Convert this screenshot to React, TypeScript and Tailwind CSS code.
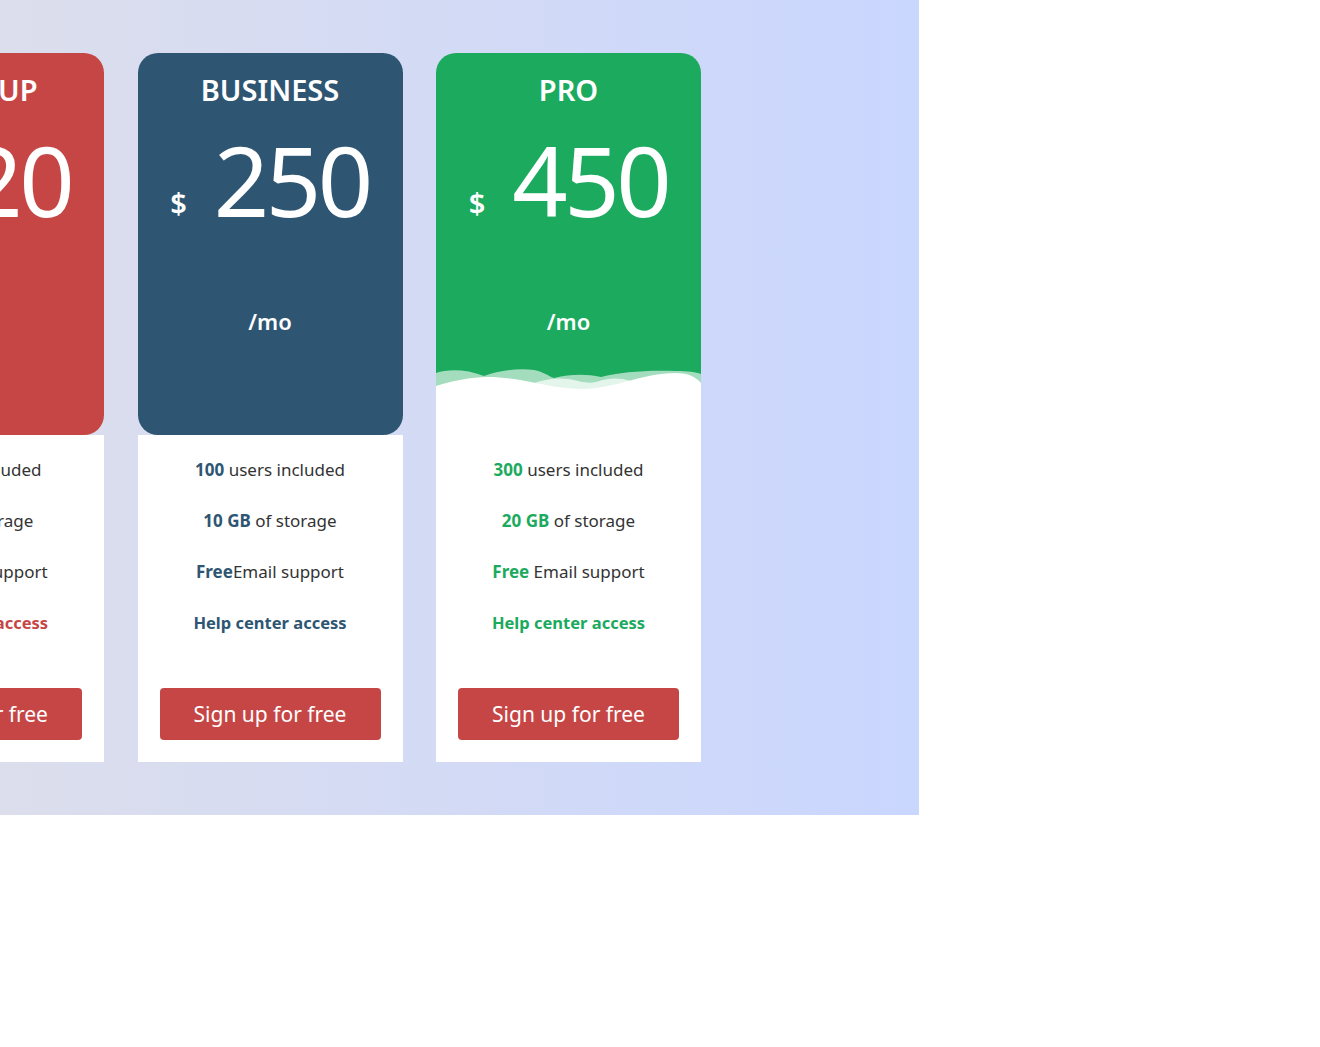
import React from "react";

type Plan = {
  name: string;
  price: string;
  users: string;
  storage: string;
  gap: boolean;
  head: string;
  text: string;
  wave?: boolean;
};

const plans: Plan[] = [
  { name: "START UP", price: "120", users: "50", storage: "5 GB", gap: true, head: "bg-[#c64646] rounded-[20px]", text: "text-[#c64646]" },
  { name: "BUSINESS", price: "250", users: "100", storage: "10 GB", gap: false, head: "bg-[#2e5673] rounded-[20px]", text: "text-[#2e5673]" },
  { name: "PRO", price: "450", users: "300", storage: "20 GB", gap: true, head: "bg-[#1baa5e] rounded-t-[20px]", text: "text-[#1baa5e]", wave: true },
];

function Wave() {
  return (
    <svg className="absolute bottom-0 left-0" width="265" height="67" viewBox="0 0 265 67" preserveAspectRatio="none">
      <path
        d="M0,5 C12,1 30,1 48,8 C62,3 80,0 98,2 C108,4 112,8 118,10 C135,6 150,6 165,9 C185,4 210,2 240,3 C252,3 260,4 265,6 L265,67 L0,67 Z"
        fill="#ffffff"
        fillOpacity="0.6"
      />
      <path
        d="M90,18 C105,12 118,9 132,11 C145,13 150,16 160,14 C172,10 182,9 195,13 C185,20 165,22 150,22 C130,22 105,22 90,18 Z"
        fill="#ffffff"
        fillOpacity="0.7"
      />
      <path
        d="M0,18 C15,13 35,9 52,9 C85,9 115,21 145,21 C180,21 205,5 240,5 C252,5 260,9 265,15 L265,67 L0,67 Z"
        fill="#ffffff"
      />
    </svg>
  );
}

function Card({ p }: { p: Plan }) {
  return (
    <div className="w-[265px] shrink-0 flex flex-col">
      <div className={`${p.head} relative h-[382px] flex flex-col items-center text-white`}>
        <div className="mt-[18px] text-[29px] font-semibold leading-[38px]">{p.name}</div>
        <div className="mt-[20px] flex items-end">
          <span className="text-[29px] font-semibold leading-none mb-[12px] mr-[27px]">$</span>
          <span className="text-[97px] font-normal leading-[100px] tracking-[-3.5px]">{p.price}</span>
        </div>
        <div className="mt-[77px] text-[22px] font-semibold leading-[30px]">/mo</div>
        {p.wave && <Wave />}
      </div>
      <div className="bg-white h-[327px] flex flex-col items-center text-[17px] text-[#333] pt-[22px]">
        <div className="h-[51px] leading-[25px]">
          <b className={`${p.text} font-bold`}>{p.users}</b> users included
        </div>
        <div className="h-[51px] leading-[25px]">
          <b className={`${p.text} font-bold`}>{p.storage}</b> of storage
        </div>
        <div className="h-[51px] leading-[25px]">
          <b className={`${p.text} font-bold`}>Free</b>
          {p.gap ? " " : ""}Email support
        </div>
        <div className={`h-[51px] leading-[25px] font-bold text-[16.5px] ${p.text}`}>Help center access</div>
        <button className="mt-[27px] w-[221px] h-[52px] rounded-[4px] bg-[#c64646] text-white text-[21px] leading-none">
          Sign up for free
        </button>
      </div>
    </div>
  );
}

export default function App() {
  return (
    <div className="w-full h-[1047px] bg-white" style={{ fontFamily: '"Noto Sans", "Open Sans", sans-serif' }}>
      <div className="w-[919px] h-[815px] overflow-hidden bg-gradient-to-r from-[#dcdeec] to-[#c9d6fe] pt-[53px]">
        <div className="flex gap-[33.5px] ml-[-161px]">
          {plans.map((p) => (
            <Card key={p.name} p={p} />
          ))}
        </div>
      </div>
    </div>
  );
}
